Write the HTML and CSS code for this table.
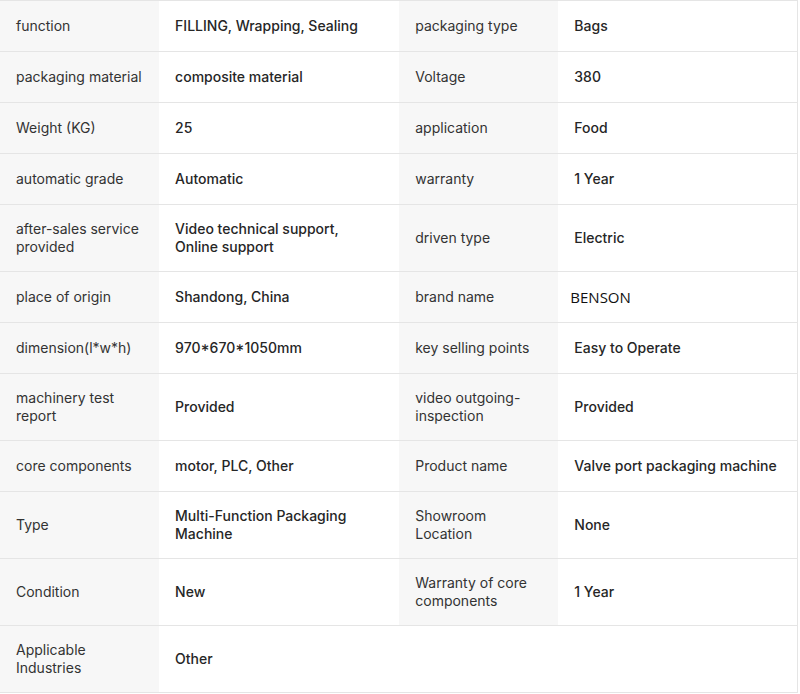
FILE: index.html
```html
<!DOCTYPE html>
<html>
<head>
<meta charset="utf-8">
<link rel="stylesheet" href="styles.css">
</head>
<body>
<table class="spec">
<colgroup><col class="c1"><col class="c2"><col class="c3"><col class="c4"></colgroup>
<tbody>
<tr><td class="k">function</td><td class="v">FILLING, Wrapping, Sealing</td><td class="k">packaging type</td><td class="v">Bags</td></tr>
<tr><td class="k">packaging material</td><td class="v">composite material</td><td class="k">Voltage</td><td class="v">380</td></tr>
<tr><td class="k">Weight (KG)</td><td class="v">25</td><td class="k">application</td><td class="v">Food</td></tr>
<tr><td class="k">automatic grade</td><td class="v">Automatic</td><td class="k">warranty</td><td class="v">1 Year</td></tr>
<tr><td class="k">after-sales service provided</td><td class="v">Video technical support, Online support</td><td class="k">driven type</td><td class="v">Electric</td></tr>
<tr><td class="k">place of origin</td><td class="v">Shandong, China</td><td class="k">brand name</td><td class="v brand">BENSON</td></tr>
<tr><td class="k">dimension(l*w*h)</td><td class="v">970*670*1050mm</td><td class="k">key selling points</td><td class="v">Easy to Operate</td></tr>
<tr><td class="k">machinery test report</td><td class="v">Provided</td><td class="k">video outgoing-inspection</td><td class="v">Provided</td></tr>
<tr><td class="k">core components</td><td class="v">motor, PLC, Other</td><td class="k">Product name</td><td class="v">Valve port packaging machine</td></tr>
<tr><td class="k">Type</td><td class="v">Multi-Function Packaging Machine</td><td class="k">Showroom Location</td><td class="v">None</td></tr>
<tr><td class="k">Condition</td><td class="v">New</td><td class="k">Warranty of core components</td><td class="v">1 Year</td></tr>
<tr><td class="k">Applicable Industries</td><td class="v">Other</td><td class="e"></td><td class="e"></td></tr>
</tbody>
</table>
</body>
</html>
```
FILE: styles.css
```css
html, body {
  margin: 0;
  padding: 0;
  background: #ffffff;
}
.spec {
  width: 798px;
  border-collapse: collapse;
  table-layout: fixed;
  font-family: Inter, "Liberation Sans", sans-serif;
  font-size: 14px;
  line-height: 18px;
  border-top: 1px solid #e5e5e5;
  border-right: 1px solid #e5e5e5;
}
.c1 { width: 159px; }
.c2 { width: 240px; }
.c3 { width: 159px; }
.c4 { width: 239px; }
.spec td {
  padding: 15px 16px;
  height: 20px;
  vertical-align: middle;
  border-bottom: 1px solid #e5e5e5;
  box-sizing: content-box;
}
.k {
  background: #f7f7f7;
  color: #333333;
  font-weight: 400;
}
.v {
  background: #ffffff;
  color: #262626;
  font-weight: 500;
}
.e {
  background: #ffffff;
}
.spec .brand {
  font-family: "Open Sans", "DejaVu Sans", sans-serif;
  font-size: 15px;
  font-weight: 400;
  color: #111111;
  padding-left: 12px;
}
```
